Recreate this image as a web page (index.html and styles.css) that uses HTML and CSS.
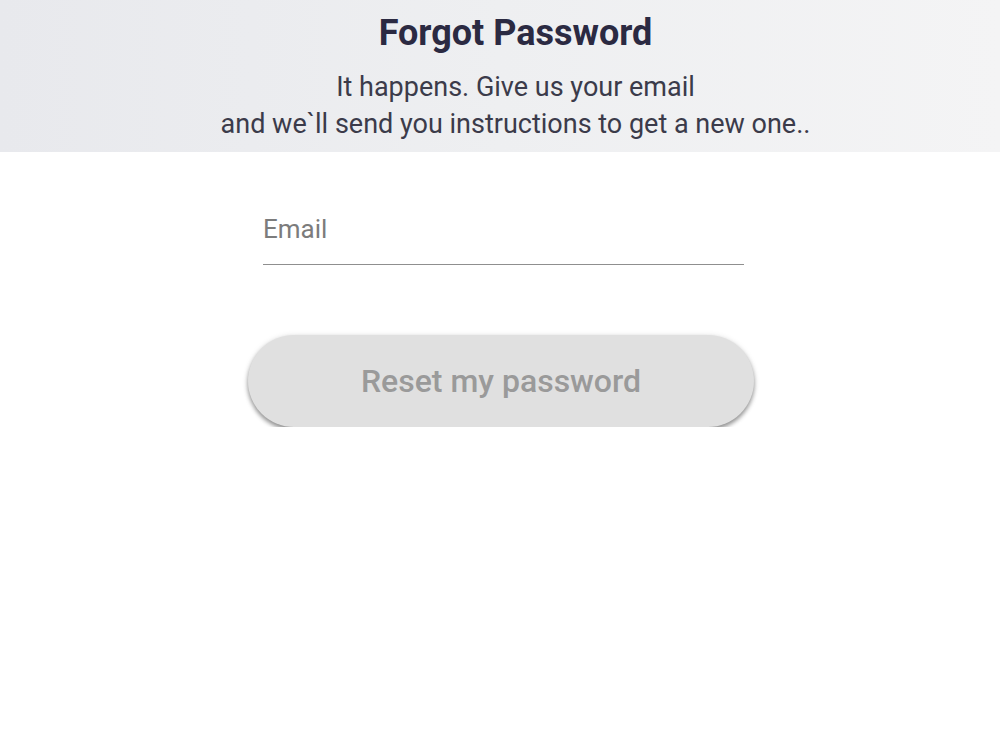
FILE: index.html
```html
<!DOCTYPE html>
<html lang="en">
<head>
<meta charset="utf-8">
<title>Forgot Password</title>
<link rel="stylesheet" href="styles.css">
</head>
<body>
<header class="hero">
  <h1 class="hero-title">Forgot Password</h1>
  <p class="hero-text">It happens. Give us your email<br>and we`ll send you instructions to get a new one..</p>
</header>
<main class="form-area">
  <form class="reset-form">
    <label class="field">
      <span class="field-label">Email</span>
      <input class="field-input" type="email">
    </label>
    <button class="reset-btn" type="button" disabled>Reset my password</button>
  </form>
</main>
</body>
</html>
```
FILE: styles.css
```css
html, body {
  margin: 0;
  padding: 0;
  background: #ffffff;
  font-family: Roboto, "Liberation Sans", Arial, sans-serif;
}

.hero {
  height: 152px;
  box-sizing: border-box;
  padding: 13px 0 0 31px;
  background: linear-gradient(90deg, #e8e9ed 0%, #eeeff1 50%, #f4f4f5 100%);
  text-align: center;
}

.hero-title {
  margin: 0;
  font-size: 36px;
  line-height: 40px;
  font-weight: 700;
  color: #2b2a42;
}

.hero-text {
  margin: 16px 0 0;
  font-size: 27px;
  line-height: 37px;
  font-weight: 400;
  color: #3b3b4a;
}

.form-area {
  display: flex;
  justify-content: center;
  padding: 62px 0 0 2px;
}

.reset-form {
  width: 506px;
  display: flex;
  flex-direction: column;
}

.field {
  width: 481px;
  margin-left: 15px;
  display: flex;
  flex-direction: column;
  border-bottom: 1.5px solid #8f8f8f;
}

.field-label {
  font-size: 26px;
  line-height: 30px;
  color: #7c7c7c;
}

.field-input {
  border: none;
  outline: none;
  height: 20px;
  padding: 0;
  background: transparent;
  font: inherit;
}

.reset-btn {
  margin-top: 70px;
  width: 506px;
  height: 92px;
  border: none;
  border-radius: 46px;
  background: #e0e0e0;
  color: #9a9a9a;
  font-family: Roboto, "Liberation Sans", Arial, sans-serif;
  font-size: 32px;
  font-weight: 500;
  box-shadow: 0 3px 4px rgba(0, 0, 0, 0.38), 0 1px 6px rgba(0, 0, 0, 0.12);
}
```
